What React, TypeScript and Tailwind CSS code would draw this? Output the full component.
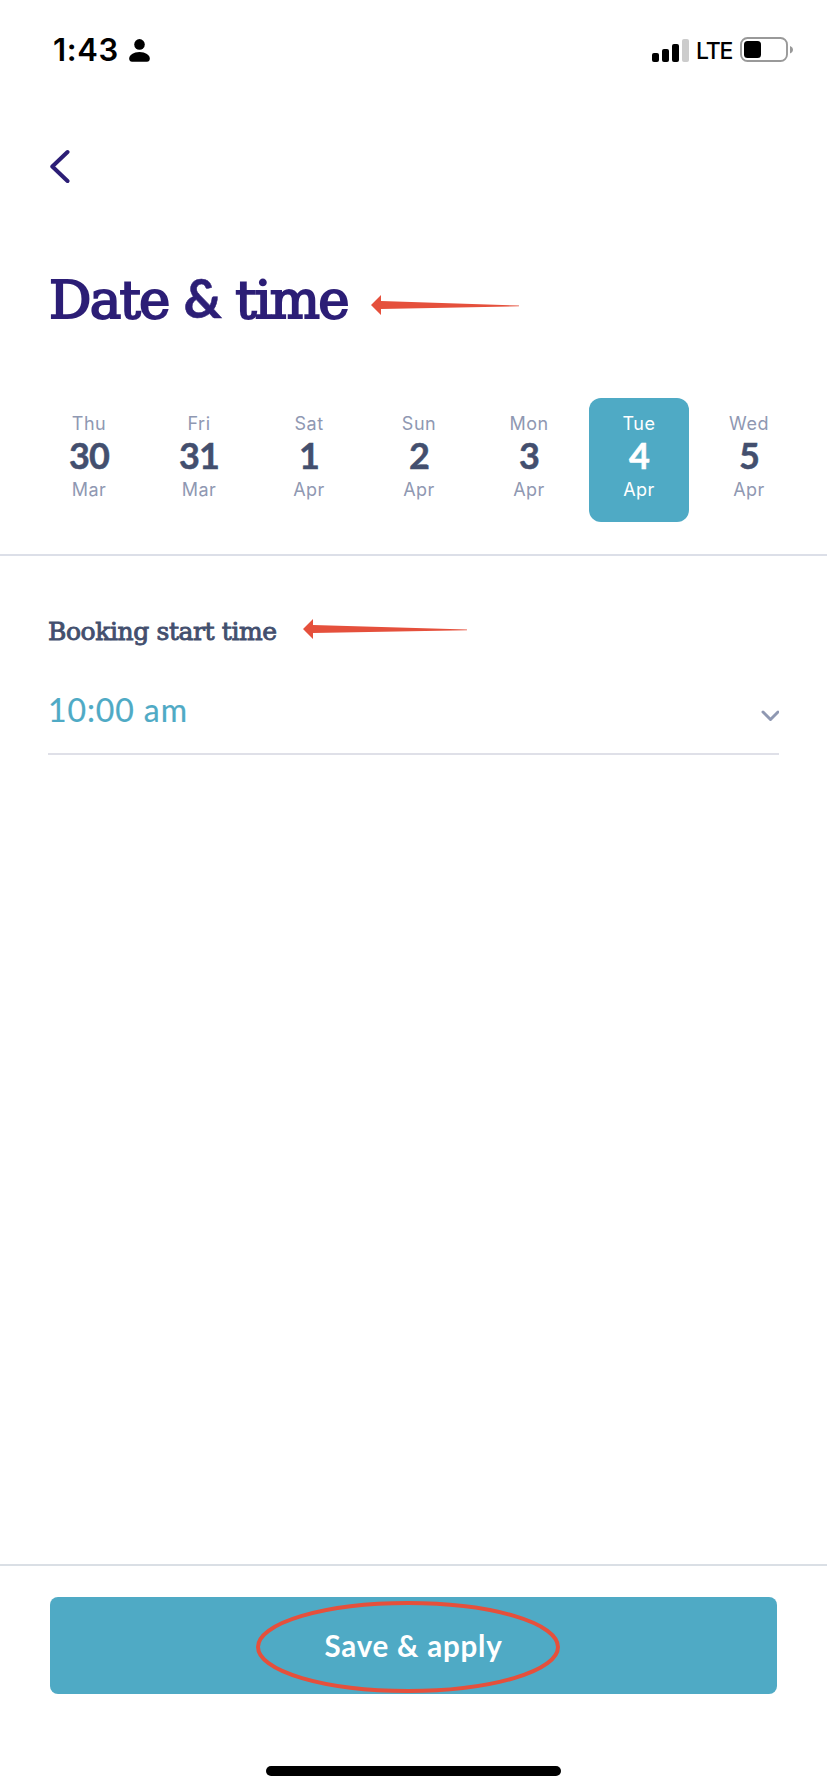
import React, { useState } from 'react';
import clsx from 'clsx';

const days = [
  { weekday: 'Thu', day: 30, month: 'Mar' },
  { weekday: 'Fri', day: 31, month: 'Mar' },
  { weekday: 'Sat', day: 1, month: 'Apr' },
  { weekday: 'Sun', day: 2, month: 'Apr' },
  { weekday: 'Mon', day: 3, month: 'Apr' },
  { weekday: 'Tue', day: 4, month: 'Apr' },
  { weekday: 'Wed', day: 5, month: 'Apr' },
];

const StatusBar = () => {
  return (
    <div className="flex h-[100px] shrink-0 items-start justify-between pt-[32px] pr-[33px] pl-[53px] text-black">
      <div className="flex items-center">
        <span className="w-[76px] font-['Inter',sans-serif] text-[31px] leading-[36px] font-semibold tracking-[0.6px] whitespace-nowrap">
          1:43
        </span>
        <svg width="21" height="23" viewBox="0 0 21 23">
          <circle cx="10.5" cy="5.4" r="5.3" />
          <path d="M0.2 19.5C0.2 16 4.5 13 10.5 13S20.8 16 20.8 19.5C20.8 21.8 19.6 22.8 18 22.8H3C1.4 22.8 0.2 21.8 0.2 19.5Z" />
        </svg>
      </div>
      <div className="flex items-center">
        <svg width="38" height="24" viewBox="0 0 38 24">
          <rect x="0" y="14" width="7" height="9" rx="2" />
          <rect x="10" y="10" width="7" height="13" rx="2" />
          <rect x="20" y="5" width="7" height="18" rx="2" />
          <rect x="30" y="0" width="7" height="23" rx="2" fill="#cccccc" />
        </svg>
        <span className="mt-px ml-[6px] w-[44px] font-['Inter',sans-serif] text-[23px] leading-[36px] font-medium tracking-[-1.2px]">
          LTE
        </span>
        <svg width="54" height="26" viewBox="0 0 54 26" className="-mt-px">
          <rect x="1" y="1" width="46" height="23" rx="6.5" fill="none" stroke="#999999" strokeWidth="1.9" />
          <rect x="4" y="4" width="17" height="17" rx="3.5" />
          <path d="M50 9C54 10.500 54 15 50 16.500Z" fill="#999999" />
        </svg>
      </div>
    </div>
  );
};

const Arrow = ({ width }: { width: number }) => {
  return (
    <svg width={width} height="20" viewBox={`0 0 ${width} 20`}>
      <path d={`M0 10L10 0V6L${width} 10.500V11.200L10 14V20Z`} fill="#e5503c" />
    </svg>
  );
};

const App = () => {
  const [selected, setSelected] = useState<number>(4);

  return (
    <div className="flex h-[1792px] w-[827px] flex-col overflow-hidden bg-white font-['Lato',sans-serif]">
      <StatusBar />

      <button type="button" className="mt-[49px] ml-[49px] w-[22px]">
        <svg width="22" height="34" viewBox="0 0 22 34" fill="none">
          <path
            d="M18.500 3L3.300 17.500L18.500 32"
            stroke="#2c1e76"
            strokeWidth="4"
            strokeLinecap="round"
            strokeLinejoin="round"
          />
        </svg>
      </button>

      <div className="mt-[83px] flex h-[70px] items-center gap-[22px] pl-[49px]">
        <h1 className="mb-[4px] w-[300px] font-['DejaVu_Serif',serif] text-[53px] leading-[66px] tracking-[-1.8px] whitespace-nowrap text-[#2c1e76] [-webkit-text-stroke:2px_#2c1e76]">
          Date <span className="font-['Lato',sans-serif] font-bold [-webkit-text-stroke:0.5px_#2c1e76]">&amp;</span> time
        </h1>
        <div className="pt-[7px]">
          <Arrow width={148} />
        </div>
      </div>

      <div className="mt-[62px] flex h-[158px] shrink-0 items-start gap-[10px] border-b-2 border-[#dcdfe8] pl-[39px]">
        {days.map((item) => (
          <button
            key={item.day}
            type="button"
            onClick={() => setSelected(item.day)}
            className={clsx(
              'flex h-[124px] w-[100px] shrink-0 flex-col items-center rounded-xl pt-[14px]',
              selected === item.day ? 'bg-[#4faac5] text-white' : 'text-[#8f98b2]',
            )}
          >
            <span className="font-['Inter',sans-serif] text-[18px] leading-[24px] tracking-[0.5px]">
              {item.weekday}
            </span>
            <span
              className={clsx(
                'mb-[4px] text-[36px] leading-[38px] font-bold tracking-[-1px] [-webkit-text-stroke:0.5px]',
                selected === item.day ? 'text-white' : 'text-[#434f6e]',
              )}
            >
              {item.day}
            </span>
            <span className="font-['Inter',sans-serif] text-[18px] leading-[24px] tracking-[0.5px]">
              {item.month}
            </span>
          </button>
        ))}
      </div>

      <div className="flex grow flex-col px-[48px] pt-[56px]">
        <div className="flex h-[40px] items-center gap-[25px]">
          <h2 className="w-[230px] font-['DejaVu_Serif',serif] text-[25px] leading-[40px] tracking-[-0.4px] whitespace-nowrap text-[#434f6e] [-webkit-text-stroke:0.9px]">
            Booking start time
          </h2>
          <div className="pb-[7px]">
            <Arrow width={164} />
          </div>
        </div>
        <button
          type="button"
          className="mt-[39px] flex h-[64px] items-start justify-between border-b-2 border-[#dfe0e8] text-[#4faac5]"
        >
          <span className="text-[32px] leading-[38px] tracking-[0.9px] whitespace-nowrap [-webkit-text-stroke:0.2px]">
            10:00 am
          </span>
          <svg width="18" height="12" viewBox="0 0 18 12" fill="none" className="mt-[19px]">
            <path
              d="M2 2L9.500 9.500L17 2"
              stroke="#8f98b2"
              strokeWidth="3"
              strokeLinecap="round"
              strokeLinejoin="round"
            />
          </svg>
        </button>
      </div>

      <div className="flex h-[228px] shrink-0 flex-col border-t-2 border-[#dadfe5] px-[50px] pt-[31px]">
        <button
          type="button"
          className="relative flex h-[97px] items-center justify-center rounded-lg bg-[#4faac5] text-white"
        >
          <span className="text-[29.5px] leading-[40px] font-bold tracking-[0.8px] whitespace-nowrap">
            Save &amp; apply
          </span>
          <svg width="304" height="92" viewBox="0 0 304 92" fill="none" className="absolute top-[4px] left-[206px]">
            <ellipse cx="152" cy="46" rx="150" ry="44" stroke="#e5503c" strokeWidth="4" />
          </svg>
        </button>
        <div className="mt-[72px] h-[10px] w-[295px] self-center rounded-full bg-black" />
      </div>
    </div>
  );
};

export default App;
